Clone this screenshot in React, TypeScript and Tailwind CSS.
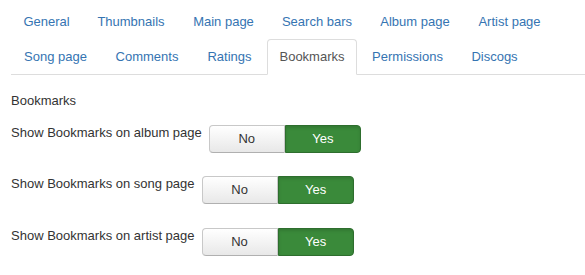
import React from "react"

const rowOne = [
  { label: "General", w: "w-[71px]" },
  { label: "Thumbnails", w: "w-[94px]" },
  { label: "Main page", w: "w-[87px]" },
  { label: "Search bars", w: "w-[96px]" },
  { label: "Album page", w: "w-[96px]" },
  { label: "Artist page", w: "w-[89px]" },
]

const rowTwo = [
  { label: "Song page", w: "w-[89px]" },
  { label: "Comments", w: "w-[90px]" },
  { label: "Ratings", w: "w-[71px]" },
  { label: "Bookmarks", w: "w-[90px]", active: true },
  { label: "Permissions", w: "w-[97px]" },
  { label: "Discogs", w: "w-[73px]" },
]

const settings = [
  { label: "Show Bookmarks on album page", mt: "mt-[14px]" },
  { label: "Show Bookmarks on song page", mt: "mt-[22px]" },
  { label: "Show Bookmarks on artist page", mt: "mt-[23px]" },
]

type Tab = { label: string; w: string; active?: boolean }

function TabItem({ tab }: { tab: Tab }) {
  return (
    <li className="mr-[2px] mb-[-1px]">
      <a
        className={
          "block h-[36px] py-[8px] text-center leading-[18px] rounded-t-[4px] border " +
          tab.w +
          (tab.active
            ? " border-[#ddd] border-b-transparent bg-white text-[#555]"
            : " border-transparent text-[#3574b2]")
        }
      >
        {tab.label}
      </a>
    </li>
  )
}

function YesNo() {
  return (
    <div className="mt-[1px] flex h-[28px]">
      <button className="w-[76px] rounded-l-[4px] border border-[#c8c8c8] border-b-[#b0b0b0] bg-gradient-to-b from-white to-[#e8e8e8] text-[#333] leading-[18px]">
        No
      </button>
      <button className="w-[76px] rounded-r-[4px] border border-[#2e6e2e] bg-[#3a8a3a] text-white leading-[18px] shadow-[inset_0_2px_3px_rgba(0,0,0,0.12)]">
        Yes
      </button>
    </div>
  )
}

export default function App() {
  return (
    <div className="w-[585px] h-[275px] bg-white pt-[4px] pl-[11px] text-[13px] text-[#333] font-['Liberation_Sans',Arial,sans-serif]">
      {/* Tabs */}
      <ul className="flex flex-wrap border-b border-[#ddd]">
        {rowOne.map((t) => (
          <TabItem key={t.label} tab={t} />
        ))}
        {rowTwo.map((t) => (
          <TabItem key={t.label} tab={t} />
        ))}
      </ul>

      <div className="mt-[17px] leading-[18px]">Bookmarks</div>

      {settings.map((s) => (
        <div key={s.label} className={"flex items-start " + s.mt}>
          <label className="mr-[7px] leading-[18px]">{s.label}</label>
          <YesNo />
        </div>
      ))}
    </div>
  )
}
